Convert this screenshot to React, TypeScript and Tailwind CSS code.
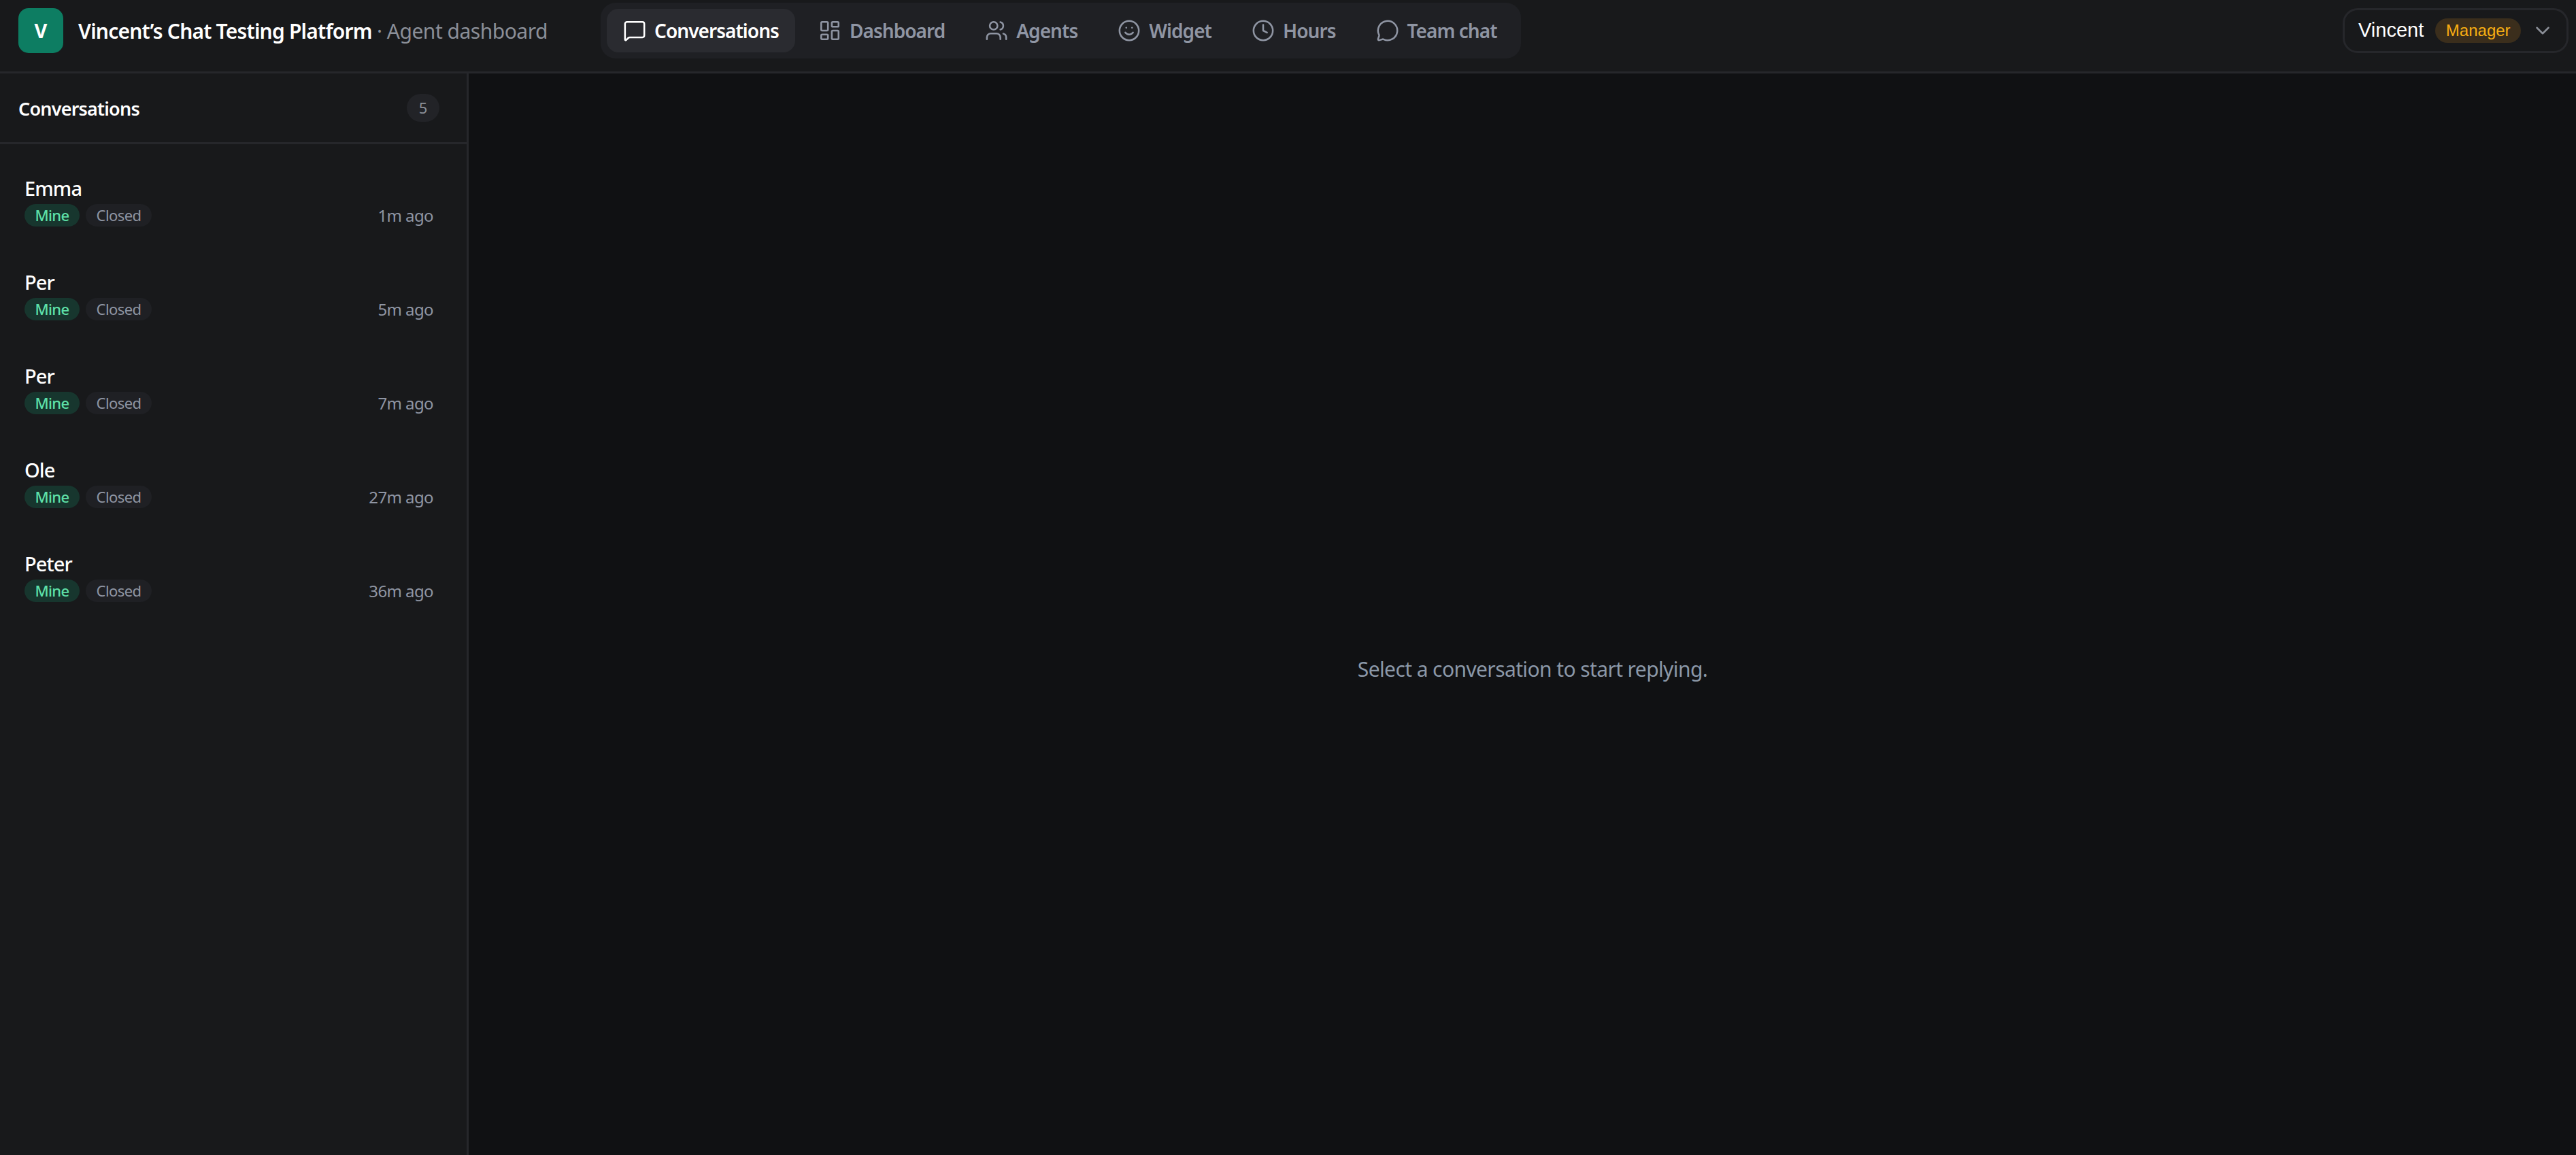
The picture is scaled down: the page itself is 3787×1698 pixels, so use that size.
import { Clock, LayoutDashboard, MessageCircle, MessageSquare, Smile, Users, ChevronDown } from 'lucide-react';

const navItems = [
  { label: 'Conversations', icon: MessageSquare, active: true },
  { label: 'Dashboard', icon: LayoutDashboard },
  { label: 'Agents', icon: Users },
  { label: 'Widget', icon: Smile },
  { label: 'Hours', icon: Clock },
  { label: 'Team chat', icon: MessageCircle },
];

const conversations = [
  { name: 'Emma', time: '1m ago' },
  { name: 'Per', time: '5m ago' },
  { name: 'Per', time: '7m ago' },
  { name: 'Ole', time: '27m ago' },
  { name: 'Peter', time: '36m ago' },
];

export default function App() {
  return (
    <div className="flex h-[1698px] w-full flex-col overflow-hidden bg-[#101113] font-['Noto_Sans',sans-serif] text-white">
      <header className="flex h-[108px] shrink-0 items-center border-b-[3px] border-[#26272b] bg-[#18191b] pb-[15px] pl-[27px] pr-[11px]">
        <div className="flex h-[66px] w-[66px] items-center justify-center rounded-[15px] bg-[#0d7d62] text-[29px] font-bold">V</div>
        <div className="ml-[22px] w-[768px] text-[30px] whitespace-nowrap">
          <span className="font-semibold tracking-[-0.8px]">Vincent’s Chat Testing Platform</span>
          <span className="tracking-[-0.5px] text-[#8b8f98]"> · Agent dashboard</span>
        </div>
        <nav className="flex h-[82px] w-[1353px] items-center gap-[10px] rounded-[22px] bg-[#1f2024] px-[9px]">
          {navItems.map((item) => (
            <div
              key={item.label}
              className={
                item.active
                  ? 'flex h-[64px] items-center gap-[12px] rounded-[17px] bg-[#2a2b30] pl-[24px] pr-[24px] text-[28px] font-semibold tracking-[-0.95px] whitespace-nowrap text-white'
                  : 'flex h-[64px] items-center gap-[12px] rounded-[17px] pl-[24px] pr-[25px] text-[28px] font-semibold tracking-[-0.95px] whitespace-nowrap text-[#8f95a3]'
              }
            >
              <item.icon className="h-[34px] w-[34px] shrink-0" strokeWidth={1.8} />
              {item.label}
            </div>
          ))}
        </nav>
        <div className="ml-auto flex h-[66px] w-[332px] items-center rounded-[22px] border-[3px] border-[#26272b] pl-[20px] font-['Liberation_Sans',sans-serif]">
          <span className="text-[29px]">Vincent</span>
          <span className="ml-[17px] flex h-[36px] w-[126px] items-center justify-center rounded-full bg-[#3b2e1c] text-[24px] text-[#f8ae12]">Manager</span>
          <ChevronDown className="ml-[15px] h-[34px] w-[34px] text-[#8b8f98]" strokeWidth={1.8} />
        </div>
      </header>
      <div className="flex min-h-0 flex-1">
        <aside className="w-[689px] shrink-0 border-r-[3px] border-[#26272b] bg-[#18191b]">
          <div className="flex h-[104px] items-center justify-between border-b-[3px] border-[#26272b] pl-[27px] pr-[40px]">
            <span className="mt-[4px] text-[27px] font-semibold tracking-[-0.8px]">Conversations</span>
            <span className="flex h-[41px] w-[48px] items-center justify-center rounded-full bg-[#222327] text-[22px] text-[#8b8f98]">5</span>
          </div>
          <div>
            {conversations.map((c, i) => (
              <div key={i} className="flex h-[138px] items-end justify-between pb-[17px] pl-[36px] pr-[49px]">
                <div>
                  <div className="text-[29px] leading-[40px] font-medium tracking-[-0.9px]">{c.name}</div>
                  <div className="mt-[3px] flex gap-[9px] text-[22px] tracking-[-0.6px]">
                    <span className="flex h-[33px] w-[81px] items-center justify-center rounded-full bg-[#17362e] font-medium text-[#5ee0a8]">Mine</span>
                    <span className="flex h-[33px] w-[97px] items-center justify-center rounded-full bg-[#1f2024] text-[#8f95a3]">Closed</span>
                  </div>
                </div>
                <span className="text-[24px] leading-[33px] tracking-[-0.6px] text-[#8f95a3]">{c.time}</span>
              </div>
            ))}
          </div>
        </aside>
        <main className="flex flex-1 items-center justify-center pl-[30px] pt-[160px]">
          <p className="text-[30px] tracking-[-0.6px] text-[#8b98a8]">Select a conversation to start replying.</p>
        </main>
      </div>
    </div>
  );
}
